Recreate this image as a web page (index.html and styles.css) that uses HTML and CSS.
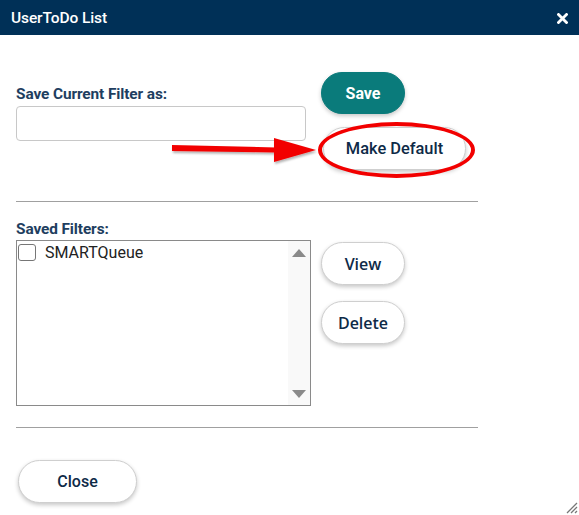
FILE: index.html
```html
<!DOCTYPE html>
<html>
<head>
<meta charset="utf-8">
<link rel="stylesheet" href="styles.css">
</head>
<body>
<div class="dialog">
  <div class="titlebar">
    <span class="title">UserToDo List</span>
    <svg class="x-icon" width="11" height="11" viewBox="0 0 11 11"><path d="M1.5 1.5 L9.5 9.5 M9.5 1.5 L1.5 9.5" stroke="#fff" stroke-width="2.8" stroke-linecap="square"/></svg>
  </div>
  <div class="content">
    <div class="row top-row">
      <div class="left-col">
        <label class="label first-label">Save Current Filter as:</label>
        <input class="text-input" type="text">
      </div>
      <div class="btn-col">
        <button class="btn btn-primary save-btn">Save</button>
        <button class="btn default-btn">Make Default</button>
      </div>
    </div>
    <hr class="divider first-divider">
    <label class="label">Saved Filters:</label>
    <div class="row list-row">
      <div class="listbox">
        <div class="list-items">
          <div class="item"><span class="checkbox"></span><span>SMARTQueue</span></div>
        </div>
        <div class="scrollbar">
          <span class="tri up"></span>
          <span class="tri down"></span>
        </div>
      </div>
      <div class="btn-col side-btns">
        <button class="btn btn-alt">View</button>
        <button class="btn btn-alt">Delete</button>
      </div>
    </div>
    <hr class="divider second-divider">
    <button class="btn close-btn">Close</button>
  </div>

  <svg class="annot-arrow" width="152" height="30" viewBox="0 0 152 30">
    <defs>
      <filter id="sh" x="-10%" y="-30%" width="120%" height="170%">
        <feDropShadow dx="1" dy="2" stdDeviation="1.2" flood-color="#000" flood-opacity="0.3"/>
      </filter>
    </defs>
    <g filter="url(#sh)">
      <path d="M2 9 L106 11.5 L106 16.5 L2 15 Z" fill="#f20000"/>
      <path d="M104 2 L146 14 L104 26 Z" fill="#f20000"/>
    </g>
  </svg>
  <div class="annot-ellipse"></div>

  <svg class="grip" width="14" height="14" viewBox="0 0 14 14">
    <path d="M13 3 L3 13 M13 7 L7 13 M13 11 L11 13" stroke="#777" stroke-width="1.3"/>
  </svg>
</div>
</body>
</html>
```
FILE: styles.css
```css
* { box-sizing: border-box; }
html, body {
  margin: 0;
  padding: 0;
  background: #fff;
}
body {
  font-family: Roboto, "Liberation Sans", sans-serif;
}
.dialog {
  position: relative;
  width: 579px;
  height: 515px;
  background: #fff;
}
.titlebar {
  height: 35px;
  background: #003057;
  display: flex;
  align-items: center;
  justify-content: space-between;
  padding: 0 11px 0 11px;
}
.title {
  color: #fff;
  font-size: 15.5px;
  font-weight: 500;
  letter-spacing: -0.1px;
}
.x-icon {
  display: block;
  margin-top: 1px;
}
.content {
  padding: 37px 0 0 16px;
  width: 478px;
}
.row {
  display: flex;
}
.top-row {
  height: 98px;
}
.left-col {
  width: 290px;
  display: flex;
  flex-direction: column;
  padding-top: 14px;
}
.label {
  display: block;
  color: #1e3e60;
  font-size: 15.4px;
  font-weight: 700;
  line-height: 17px;
  letter-spacing: -0.1px;
}
.text-input {
  margin-top: 3px;
  width: 290px;
  height: 35px;
  border: 1px solid #c8c8c8;
  border-radius: 4px;
  outline: none;
}
.btn-col {
  display: flex;
  flex-direction: column;
  align-items: flex-start;
  margin-left: 15px;
}
.btn {
  font-family: Roboto, "Liberation Sans", sans-serif;
  font-size: 16px;
  font-weight: 500;
  color: #0e2a47;
  background: #fff;
  border: 1px solid #cfcfcf;
  border-radius: 22px;
  box-shadow: 0 2px 4px rgba(0, 0, 0, 0.22);
  height: 43px;
  padding: 0;
  cursor: pointer;
}
.btn-primary {
  background: #0a7b7b;
  border-color: #0a7b7b;
  color: #fff;
  font-weight: 700;
}
.save-btn {
  width: 84px;
  height: 42px;
}
.default-btn {
  margin-top: 13px;
  width: 143px;
  margin-left: 2px;
  font-size: 16.4px;
}
.divider {
  margin: 0;
  border: none;
  border-top: 1px solid #a0a0a0;
  width: 462px;
}
.first-divider {
  margin-top: 31px;
  margin-bottom: 19px;
}
.list-row {
  margin-top: 2px;
  height: 165px;
}
.listbox {
  width: 295px;
  height: 166px;
  border: 1px solid #8a8a8a;
  display: flex;
}
.list-items {
  flex: 1;
  padding: 2px 0 0 1px;
}
.item {
  display: flex;
  align-items: center;
  gap: 9px;
  font-size: 16px;
  color: #222;
  height: 18px;
}
.checkbox {
  width: 18px;
  height: 17px;
  border: 1px solid #767676;
  border-radius: 3px;
  background: #fff;
}
.scrollbar {
  width: 22px;
  background: #f9f9f9;
  display: flex;
  flex-direction: column;
  justify-content: space-between;
  align-items: center;
  padding: 8px 0 7px 0;
}
.tri {
  width: 0;
  height: 0;
  border-left: 7px solid transparent;
  border-right: 7px solid transparent;
}
.tri.up { border-bottom: 8px solid #8a8a8a; }
.tri.down { border-top: 8px solid #8a8a8a; }
.side-btns {
  margin-left: 10px;
  padding-top: 2px;
  gap: 16px;
}
.btn-alt {
  font-family: "Open Sans", Roboto, sans-serif;
  font-weight: 600;
  width: 84px;
  height: 43px;
}
.second-divider {
  margin-top: 22px;
}
.close-btn {
  margin-top: 32px;
  margin-left: 2px;
  width: 119px;
}
.annot-arrow {
  position: absolute;
  left: 170px;
  top: 136px;
}
.annot-ellipse {
  position: absolute;
  left: 318px;
  top: 122px;
  width: 157px;
  height: 56px;
  border: 4px solid #f20000;
  border-radius: 50%;
}
.grip {
  position: absolute;
  right: 1px;
  bottom: 1px;
}
```
